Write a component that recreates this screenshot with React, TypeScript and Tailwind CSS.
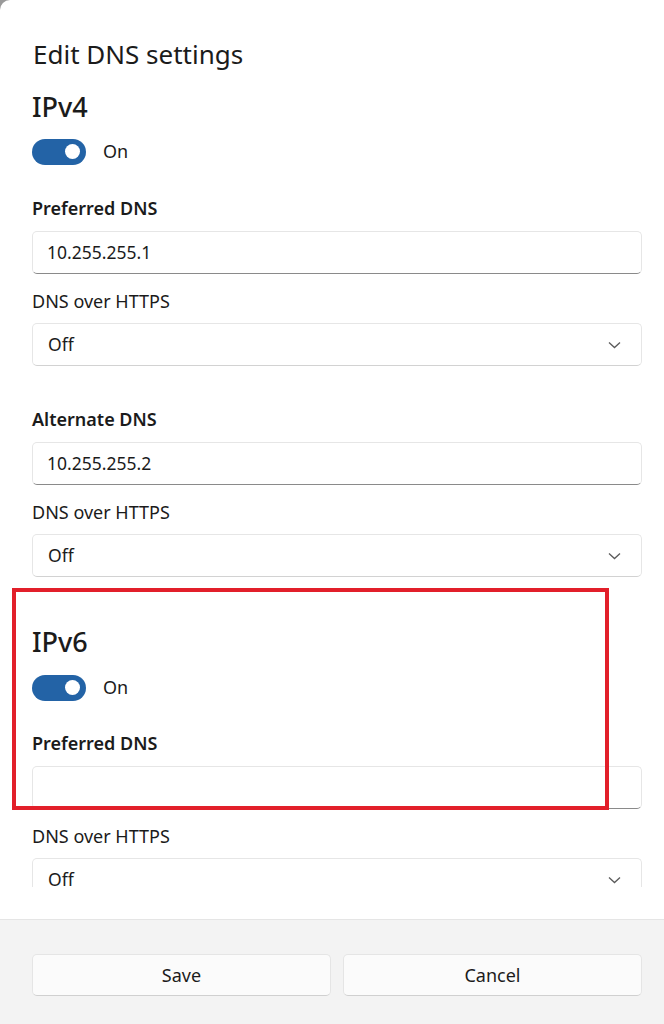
import React from 'react'

const font = { fontFamily: '"Noto Sans", "Open Sans", sans-serif' }

function Toggle() {
  return (
    <div className="flex items-center gap-[17px]">
      <div className="w-[54px] h-[26px] rounded-full bg-[#2363a6] flex items-center justify-end pr-[6px]">
        <div className="w-[15px] h-[15px] rounded-full bg-white" />
      </div>
      <span className="text-[18px] text-[#1b1b1b]">On</span>
    </div>
  )
}

function TextBox({ value }: { value: string }) {
  return (
    <div className="h-[43px] rounded-[5px] border border-[#e6e6e6] border-b-[#8a8a8a] bg-white px-[14px] flex items-center text-[17.5px] text-[#1b1b1b]">
      {value}
    </div>
  )
}

function Select() {
  return (
    <div className="h-[43px] rounded-[5px] border border-[#e6e6e6] border-b-[#d2d2d2] bg-white pl-[15px] pr-[20px] flex items-center justify-between text-[17.5px] text-[#1b1b1b]">
      <span>Off</span>
      <svg width="13" height="8" viewBox="0 0 13 8" fill="none">
        <path d="M1 1.5 L6.5 6.5 L12 1.5" stroke="#5a5a5a" strokeWidth="1.3" />
      </svg>
    </div>
  )
}

function Field({ label, value }: { label: string; value: string }) {
  return (
    <div className="flex flex-col">
      <div className="text-[18px] leading-[26px] font-semibold text-[#1b1b1b] mb-[10px]">{label}</div>
      <TextBox value={value} />
      <div className="text-[18px] leading-[26px] text-[#1b1b1b] mt-[14px] mb-[9px]">DNS over HTTPS</div>
      <Select />
    </div>
  )
}

export default function App() {
  return (
    <div className="w-[664px] h-[1024px] bg-[#9a9a9a]" style={font}>
      <div className="relative w-full h-full bg-white rounded-tl-[10px] flex flex-col overflow-hidden">
        <div className="h-[887px] overflow-hidden pl-[32px] pr-[22px] pt-[36px]">
          <h1 className="text-[26px] leading-[36px] text-[#1b1b1b] pl-[1px]">Edit DNS settings</h1>
          <h2 className="text-[27px] leading-[36px] font-medium text-[#1b1b1b] mt-[17px]">IPv4</h2>
          <div className="mt-[13px]">
            <Toggle />
          </div>
          <div className="mt-[30px]">
            <Field label="Preferred DNS" value="10.255.255.1" />
          </div>
          <div className="mt-[40px]">
            <Field label="Alternate DNS" value="10.255.255.2" />
          </div>
          <h2 className="text-[27px] leading-[36px] font-medium text-[#1b1b1b] mt-[47px]">IPv6</h2>
          <div className="mt-[14px]">
            <Toggle />
          </div>
          <div className="mt-[29px]">
            <Field label="Preferred DNS" value="" />
          </div>
        </div>
        <div className="h-[32px] bg-white" />
        <div className="flex-1 bg-[#f3f3f3] border-t border-[#e5e5e5] pl-[32px] pr-[22px] pt-[34px] flex gap-[12px] items-start">
          <button className="flex-1 h-[42px] rounded-[5px] bg-[#fbfbfb] border border-[#e5e5e5] border-b-[#d0d0d0] text-[18px] text-[#1b1b1b]">
            Save
          </button>
          <button className="flex-1 h-[42px] rounded-[5px] bg-[#fbfbfb] border border-[#e5e5e5] border-b-[#d0d0d0] text-[18px] text-[#1b1b1b]">
            Cancel
          </button>
        </div>
        <div className="absolute left-[12px] top-[588px] w-[597px] h-[222px] border-[4px] border-[#e21f2a]" />
      </div>
    </div>
  )
}
